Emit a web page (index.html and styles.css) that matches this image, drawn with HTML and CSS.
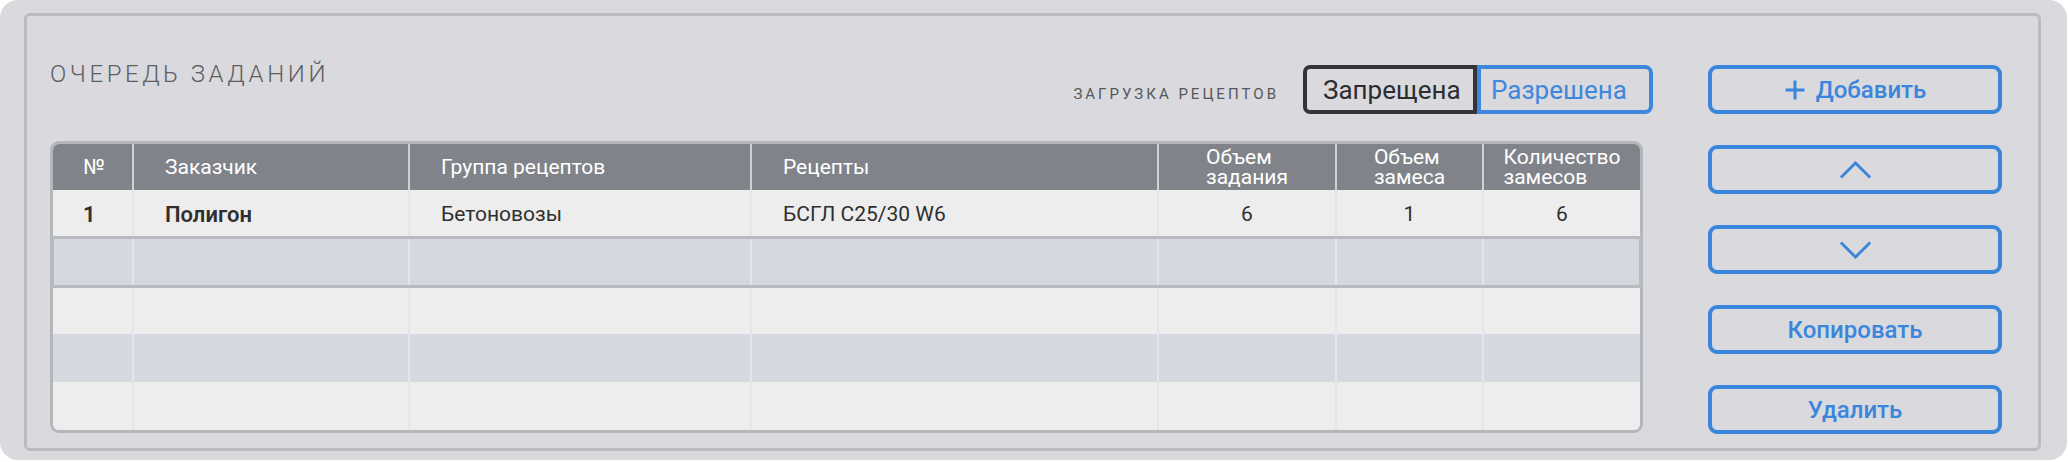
FILE: index.html
```html
<!DOCTYPE html>
<html lang="ru">
<head>
<meta charset="utf-8">
<title>Очередь заданий</title>
<link rel="stylesheet" href="styles.css">
</head>
<body>
<div class="panel">
  <div class="frame">
    <div class="main">
      <div class="top">
        <h2 class="title">ОЧЕРЕДЬ ЗАДАНИЙ</h2>
        <div class="upload">
          <span class="upload-label">ЗАГРУЗКА РЕЦЕПТОВ</span>
          <div class="seg">
            <button class="seg-btn seg-active">Запрещена</button>
            <button class="seg-btn seg-alt">Разрешена</button>
          </div>
        </div>
      </div>
      <div class="table">
        <div class="row head">
          <div class="cell">№</div>
          <div class="cell">Заказчик</div>
          <div class="cell">Группа рецептов</div>
          <div class="cell">Рецепты</div>
          <div class="cell num"><span>Объем<br>задания</span></div>
          <div class="cell num"><span>Объем<br>замеса</span></div>
          <div class="cell num"><span>Количество<br>замесов</span></div>
        </div>
        <div class="row light">
          <div class="cell strong">1</div>
          <div class="cell strong">Полигон</div>
          <div class="cell">Бетоновозы</div>
          <div class="cell">БСГЛ С25/30 W6</div>
          <div class="cell num">6</div>
          <div class="cell num">1</div>
          <div class="cell num">6</div>
        </div>
        <div class="row dark selected">
          <div class="cell"></div><div class="cell"></div><div class="cell"></div><div class="cell"></div><div class="cell"></div><div class="cell"></div><div class="cell"></div>
        </div>
        <div class="row light">
          <div class="cell"></div><div class="cell"></div><div class="cell"></div><div class="cell"></div><div class="cell"></div><div class="cell"></div><div class="cell"></div>
        </div>
        <div class="row dark">
          <div class="cell"></div><div class="cell"></div><div class="cell"></div><div class="cell"></div><div class="cell"></div><div class="cell"></div><div class="cell"></div>
        </div>
        <div class="row light last">
          <div class="cell"></div><div class="cell"></div><div class="cell"></div><div class="cell"></div><div class="cell"></div><div class="cell"></div><div class="cell"></div>
        </div>
      </div>
    </div>
    <div class="actions">
      <button class="btn">
        <svg class="ico-plus" viewBox="0 0 22 22" width="22" height="22" aria-hidden="true"><path d="M11 1.5v19M1.5 11h19" fill="none" stroke="currentColor" stroke-width="3"/></svg>
        <span>Добавить</span>
      </button>
      <button class="btn" aria-label="Вверх">
        <svg viewBox="0 0 35 19" width="33" height="18" aria-hidden="true"><path d="M2 17.5 17.5 2 33 17.5" fill="none" stroke="currentColor" stroke-width="3"/></svg>
      </button>
      <button class="btn" aria-label="Вниз">
        <svg viewBox="0 0 35 19" width="33" height="18" aria-hidden="true"><path d="M2 1.5 17.5 17 33 1.5" fill="none" stroke="currentColor" stroke-width="3"/></svg>
      </button>
      <button class="btn">Копировать</button>
      <button class="btn">Удалить</button>
    </div>
  </div>
</div>
</body>
</html>
```

FILE: styles.css
```css
* { box-sizing: border-box; }

body {
  margin: 0;
  background: #ffffff;
  font-family: Roboto, "Noto Sans", "DejaVu Sans", sans-serif;
}

.panel {
  width: 2067px;
  height: 460px;
  background: #d9d9de;
  border-radius: 18px;
  padding: 13px 26px 9px 24px;
}

.frame {
  height: 100%;
  border: 3px solid #b9bcc1;
  border-radius: 6px;
  display: flex;
}

.main {
  margin-left: 23px;
  width: 1603px;
  display: flex;
  flex-direction: column;
}

.top {
  height: 125px;
  display: flex;
  align-items: flex-start;
}

.title {
  margin: 45px 0 0;
  font-size: 24px;
  line-height: 26px;
  font-weight: 300;
  letter-spacing: 3.6px;
  color: #5d5f63;
}

.upload {
  margin-left: auto;
  margin-top: 49px;
  display: flex;
  align-items: baseline;
}

.upload-label {
  font-size: 15px;
  letter-spacing: 3px;
  color: #55575b;
  margin-right: 24px;
}

.seg { display: flex; }

.seg-btn {
  margin: 0;
  height: 49px;
  border: 4px solid;
  background: transparent;
  font-family: inherit;
  font-size: 26px;
  font-weight: 400;
  display: flex;
  align-items: center;
  padding: 0;
}

.seg-active {
  width: 174px;
  border-color: #333437;
  border-radius: 7px 0 0 7px;
  color: #2d2d30;
  padding-left: 16px;
}

.seg-alt {
  width: 176px;
  border-color: #3d87dc;
  border-radius: 0 8px 8px 0;
  color: #3d87dc;
  padding-left: 10px;
}

.table {
  width: 1593px;
  border: 3px solid #b3b6bb;
  border-radius: 9px;
  background: #ededed;
}

.row {
  display: grid;
  grid-template-columns: 79px 276px 342px 407px 178px 147px 158px;
  height: 48px;
}

.head {
  height: 46px;
  background: #808389;
  color: #ffffff;
  border-radius: 6px 6px 0 0;
}

.light { background: #ededed; }
.dark { background: #d5d8df; }
.last { border-radius: 0 0 6px 6px; }

.selected {
  position: relative;
  z-index: 1;
  outline: 3px solid #b7babf;
  outline-offset: -1px;
}

.cell {
  display: flex;
  align-items: center;
  padding-left: 31px;
  border-left: 2px solid #e3e5eb;
  font-size: 21px;
  color: #2f2f31;
}

.head .cell {
  border-left-color: #cfd1d5;
  font-size: 21px;
  font-weight: 400;
  color: #ffffff;
}

.cell:first-child {
  border-left: 0;
  padding-left: 30px;
}

.strong {
  font-size: 22px;
  font-weight: 600;
}

.num {
  justify-content: center;
  padding-left: 0;
}

.num > span {
  text-align: left;
  line-height: 20px;
}

.actions {
  margin-left: 55px;
  width: 294px;
  padding-top: 49px;
  display: flex;
  flex-direction: column;
  gap: 31px;
}

.btn {
  margin: 0;
  height: 49px;
  border: 4px solid #3a86dc;
  border-radius: 9px;
  background: transparent;
  color: #3a86dc;
  font-family: inherit;
  font-size: 24px;
  font-weight: 500;
  display: flex;
  align-items: center;
  justify-content: center;
  gap: 10px;
  padding: 0;
}

.btn svg { display: block; }
```
